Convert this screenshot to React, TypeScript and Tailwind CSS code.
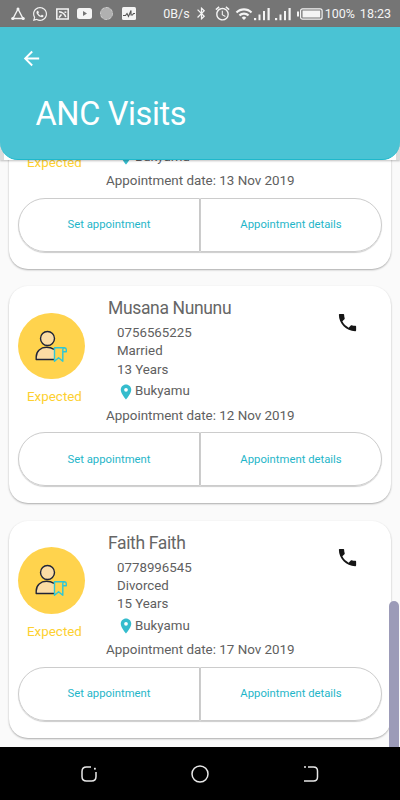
import { MdAlarm, MdArrowBack, MdBluetooth, MdPhone, MdPlace, MdWifi } from "react-icons/md";
import { FaWhatsapp } from "react-icons/fa";

interface Visit {
  name: string;
  phone: string;
  maritalStatus: string;
  age: string;
  village: string;
  date: string;
}

const visits: Visit[] = [
  {
    name: "",
    phone: "",
    maritalStatus: "",
    age: "",
    village: "Bukyamu",
    date: "13 Nov 2019",
  },
  {
    name: "Musana Nununu",
    phone: "0756565225",
    maritalStatus: "Married",
    age: "13 Years",
    village: "Bukyamu",
    date: "12 Nov 2019",
  },
  {
    name: "Faith Faith",
    phone: "0778996545",
    maritalStatus: "Divorced",
    age: "15 Years",
    village: "Bukyamu",
    date: "17 Nov 2019",
  },
];

const SignalIcon = () => (
  <svg width="17" height="14" viewBox="0 0 17 14" fill="#f4f4f4">
    <rect x="0" y="11" width="2.2" height="2.2" />
    <rect x="4.5" y="7.5" width="2" height="5.7" />
    <rect x="9" y="4" width="2" height="9.2" />
    <rect x="13.5" y="1" width="2.2" height="12.2" />
  </svg>
);

const StatusBar = () => (
  <div className="h-[27px] shrink-0 bg-[#757575] flex items-center text-[#f4f4f4] text-[12.5px] pl-[11px] pr-[9px]">
    <svg width="14" height="14" viewBox="0 0 14 14" fill="none" stroke="currentColor">
      <path d="M7 2 2 11.5h10z" strokeWidth="1.4" />
      <g fill="currentColor" stroke="none">
        <circle cx="7" cy="2" r="1.5" />
        <circle cx="1.8" cy="11.5" r="1.6" />
        <circle cx="12.2" cy="11.5" r="1.6" />
      </g>
    </svg>
    <FaWhatsapp size={16} className="ml-[7px]" />
    <svg className="ml-[7.5px]" width="13" height="12" viewBox="0 0 13 12" fill="none" stroke="currentColor">
      <rect x="0.8" y="1" width="11.4" height="10" strokeWidth="1.5" />
      <path d="M3 3.8q5 .4 6.8 5.2M3 9.5l2.5-3" strokeWidth="1.5" />
      <path d="M8.5 4.2h1.8" strokeWidth="1.5" />
    </svg>
    <svg className="ml-2" width="15" height="11" viewBox="0 0 15 11">
      <rect width="15" height="11" rx="2.5" fill="currentColor" />
      <path d="M6 3v5l4-2.5z" fill="#757575" />
    </svg>
    <span className="ml-2 size-[13px] rounded-full bg-[#b0b0b0] border border-dashed border-[#d0d0d0]" />
    <svg className="ml-[9px]" width="14" height="13" viewBox="0 0 14 13">
      <rect width="14" height="13" rx="1.5" fill="currentColor" />
      <path d="M1 8.5h2.5l1.5-2 1.5 3 2.5-6v4.5h1.5l1-1.5h1.5" fill="none" stroke="#555" strokeWidth="1.1" />
    </svg>
    <span className="ml-auto pt-[1px]">0B/s</span>
    <MdBluetooth size={15} className="ml-[4px]" />
    <MdAlarm size={17} className="ml-[5px]" />
    <MdWifi size={18} className="ml-[4px]" />
    <span className="ml-[1px] flex gap-1">
      <SignalIcon />
      <SignalIcon />
    </span>
    <svg className="ml-[5px]" width="26" height="12" viewBox="0 0 26 12">
      <rect x="0" y="3.5" width="2" height="5" fill="currentColor" />
      <rect x="3.6" y="0.8" width="21.5" height="10.4" rx="2" fill="none" stroke="currentColor" strokeWidth="1.2" />
      <rect x="5.5" y="2.5" width="17.7" height="7" fill="currentColor" />
    </svg>
    <span className="ml-[2px] pt-[1px]">100%</span>
    <span className="ml-[5px] pt-[1px]">18:23</span>
  </div>
);

const Header = () => (
  <div className="relative z-10 h-[133px] shrink-0 px-1 bg-[#dcdcdc] shadow-[0_1px_2px_rgba(0,0,0,0.25)]">
    <div className="h-full bg-white">
      <div className="-mx-1 h-full rounded-b-[18px] bg-[#4ac3d4] border-b border-[#1fb8cb] pt-[19.5px] pl-5">
        <MdArrowBack size={23} className="text-white" />
        <h1 className="mt-[22.5px] ml-[15.5px] text-[32.5px] leading-[44px] tracking-[-0.35px] text-white">ANC Visits</h1>
      </div>
    </div>
  </div>
);

// Patient figure with a bookmark over the shoulder
const PatientIcon = () => (
  <svg width="32" height="32" viewBox="0 0 32 32" fill="none" strokeWidth="1.4" strokeLinejoin="round">
    <circle cx="12.5" cy="8.5" r="7" fill="#fbdca4" stroke="#202437" />
    <path d="M19 29.5H1.2v-2.5c0-6 4.5-9.7 10.3-9.7 3 0 5.5.8 7.5 2" fill="#fbdca4" stroke="#202437" />
    <path
      d="M19.5 17.7h10q1.8.2 1.8 2v2h-3.5v9.5l-4.2-3.5-4.1 3.5zM27.8 21.5v-2q.2-1.6 1.7-1.8"
      stroke="#2fc6d6"
    />
  </svg>
);

const VisitCard = ({ visit }: { visit: Visit }) => (
  <div className="h-[217px] shrink-0 rounded-[19px] bg-white px-[9px] shadow-[0_1px_2px_rgba(0,0,0,0.32)]">
    <div className="flex h-[120px]">
      <div className="w-[72px] pt-[26.5px] flex flex-col items-start">
        <div className="size-[66.5px] shrink-0 rounded-full bg-[#ffd34d] flex items-center justify-center">
          <PatientIcon />
        </div>
        <span className="mt-[8px] ml-[9px] text-[13.4px] leading-[20px] text-[#fdd030]">Expected</span>
      </div>
      <div className="flex-1 pl-[18px] pt-[11px] text-[13.3px] leading-[18.3px] text-[#606060]">
        <h2 className="h-[23px] text-[17.5px] leading-[23px] tracking-[-0.35px] text-[#666666]">{visit.name}</h2>
        <div className="pl-[9px] pt-[4px]">
          <p className="h-[18.3px]">{visit.phone}</p>
          <p className="h-[18.3px]">{visit.maritalStatus}</p>
          <p className="h-[18.3px]">{visit.age}</p>
          <p className="flex items-center mt-[3.5px]">
            <MdPlace size={18} className="text-[#35bccd]" />
            {visit.village}
          </p>
        </div>
      </div>
      <MdPhone size={23} className="mt-[25px] mr-[23px] text-[#151515]" />
    </div>
    <p className="pl-[88px] pt-[0.5px] text-[13.4px] leading-[18px] text-[#606060]">Appointment date: {visit.date}</p>
    <div className="mt-[7.5px] h-[54px] flex text-[11.3px] text-[#1fb6c9]">
      <button className="w-[182px] pt-[2px] rounded-l-[27px] border border-[#cccccc] shadow-[0_1px_1px_rgba(0,0,0,0.2)]">
        Set appointment
      </button>
      <button className="w-[182px] pt-[2px] rounded-r-[27px] border border-[#cccccc] shadow-[0_1px_1px_rgba(0,0,0,0.2)]">
        Appointment details
      </button>
    </div>
  </div>
);

const NavBar = () => (
  <div className="relative h-[53px] shrink-0 bg-black flex items-center justify-between px-[81px] text-[#e8e8e8]">
    <svg width="16" height="16" viewBox="0 0 16 16" fill="none" stroke="currentColor" strokeWidth="1.5">
      <path d="M10 1H5.5Q1 1 1 5.5v5Q1 15 5.5 15h5q4.5 0 4.5-4.5V6" />
      <rect x="13" y="1.8" width="1.8" height="1.8" fill="currentColor" stroke="none" />
    </svg>
    <svg width="18" height="18" viewBox="0 0 18 18" fill="none" stroke="currentColor" strokeWidth="1.5">
      <circle cx="9" cy="9" r="8" />
    </svg>
    <svg width="16" height="16" viewBox="0 0 16 16" fill="none" stroke="currentColor" strokeWidth="1.5">
      <path d="M5 1h5.5Q14.5 1 14.5 5v6q0 4-4 4H1" />
      <path d="M1 1h2" />
    </svg>
  </div>
);

export default function App() {
  return (
    <div className="w-[400px] h-[800px] flex flex-col overflow-hidden bg-[#fafafa] font-[Roboto,sans-serif]">
      <StatusBar />
      <Header />
      <div className="relative flex-1 min-h-0 overflow-hidden">
        <div className="-mt-[108.5px] px-[9px] flex flex-col gap-[17.5px]">
          {visits.map((visit) => (
            <VisitCard key={visit.date} visit={visit} />
          ))}
        </div>
        {/* Scroll thumb */}
        <div className="absolute right-[1px] top-[441px] bottom-0 w-[10px] rounded-t-[5px] bg-[#9c9bb8]" />
      </div>
      <NavBar />
    </div>
  );
}
